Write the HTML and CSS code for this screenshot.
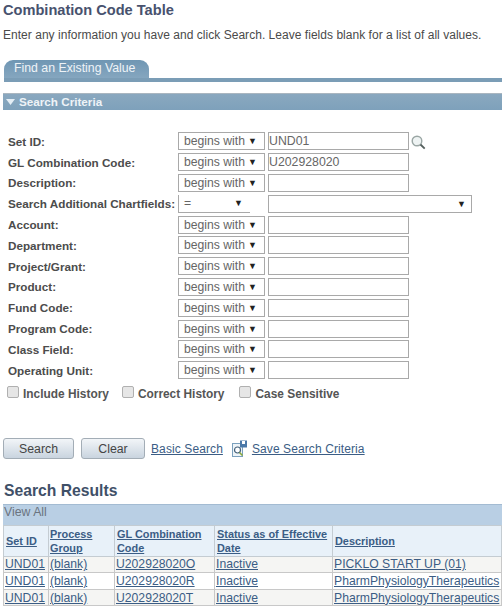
FILE: index.html
```html
<!DOCTYPE html>
<html lang="en">
<head>
    <meta charset="UTF-8">
    <title>Combination Code Table</title>
    <link rel="stylesheet" href="styles.css">
</head>
<body>
    <h1 class="page-title">Combination Code Table</h1>
    <p class="page-hint">Enter any information you have and click Search. Leave fields blank for a list of all values.</p>

    <div class="tab-strip">
        <div class="tab">Find an Existing Value</div>
    </div>

    <div class="section-bar">
        <svg class="section-arrow" width="9" height="6" viewBox="0 0 9 6"><path d="M0 0h9L4.5 6z" fill="#e4eef5"/></svg>
        Search Criteria
    </div>

    <div class="criteria">
        <div class="row">
            <label>Set ID:</label>
            <div class="select"><span>begins with</span><i>▼</i></div>
            <div class="input">UND01</div>
            <svg class="lookup" width="15" height="15" viewBox="0 0 15 15">
                <circle cx="6" cy="6" r="4.8" fill="#eef3f3" stroke="#9aa6a4" stroke-width="1.4"/>
                <path d="M9.5 9.5l4.2 4.2" stroke="#55605e" stroke-width="1.8"/>
            </svg>
        </div>
        <div class="row">
            <label>GL Combination Code:</label>
            <div class="select"><span>begins with</span><i>▼</i></div>
            <div class="input">U202928020</div>
        </div>
        <div class="row">
            <label>Description:</label>
            <div class="select"><span>begins with</span><i>▼</i></div>
            <div class="input"></div>
        </div>
        <div class="row">
            <label>Search Additional Chartfields:</label>
            <div class="select select-bare"><span>=</span><i>▼</i></div>
            <div class="input input-wide"><i>▼</i></div>
        </div>
        <div class="row">
            <label>Account:</label>
            <div class="select"><span>begins with</span><i>▼</i></div>
            <div class="input"></div>
        </div>
        <div class="row">
            <label>Department:</label>
            <div class="select"><span>begins with</span><i>▼</i></div>
            <div class="input"></div>
        </div>
        <div class="row">
            <label>Project/Grant:</label>
            <div class="select"><span>begins with</span><i>▼</i></div>
            <div class="input"></div>
        </div>
        <div class="row">
            <label>Product:</label>
            <div class="select"><span>begins with</span><i>▼</i></div>
            <div class="input"></div>
        </div>
        <div class="row">
            <label>Fund Code:</label>
            <div class="select"><span>begins with</span><i>▼</i></div>
            <div class="input"></div>
        </div>
        <div class="row">
            <label>Program Code:</label>
            <div class="select"><span>begins with</span><i>▼</i></div>
            <div class="input"></div>
        </div>
        <div class="row">
            <label>Class Field:</label>
            <div class="select"><span>begins with</span><i>▼</i></div>
            <div class="input"></div>
        </div>
        <div class="row">
            <label>Operating Unit:</label>
            <div class="select"><span>begins with</span><i>▼</i></div>
            <div class="input"></div>
        </div>
    </div>

    <div class="checks">
        <div class="check"><span class="box"></span>Include History</div>
        <div class="check"><span class="box"></span>Correct History</div>
        <div class="check"><span class="box"></span>Case Sensitive</div>
    </div>

    <div class="actions">
        <button class="btn">Search</button>
        <button class="btn">Clear</button>
        <a class="link">Basic Search</a>
        <svg class="save-icon" width="16" height="17" viewBox="0 0 16 17">
            <rect x="0.5" y="3.5" width="10" height="13" fill="#eef4f8" stroke="#7ba0bd"/>
            <rect x="8" y="0.5" width="7" height="7" fill="#4a78a8"/>
            <rect x="10" y="1" width="3" height="3" fill="#fff"/>
            <circle cx="5.5" cy="10" r="3" fill="#fff" stroke="#44607a" stroke-width="1.2"/>
            <path d="M7.5 12.5l3 3" stroke="#8aa83c" stroke-width="1.6"/>
        </svg>
        <a class="link">Save Search Criteria</a>
    </div>

    <h2 class="results-title">Search Results</h2>
    <div class="view-all">View All</div>
    <table class="results">
        <tr>
            <th class="col-set"><a>Set ID</a></th>
            <th class="col-group"><a>Process Group</a></th>
            <th class="col-code"><a>GL Combination Code</a></th>
            <th class="col-status"><a>Status as of Effective Date</a></th>
            <th><a>Description</a></th>
        </tr>
        <tr>
            <td><a>UND01</a></td>
            <td><a>(blank)</a></td>
            <td><a>U202928020O</a></td>
            <td><a>Inactive</a></td>
            <td><a>PICKLO START UP (01)</a></td>
        </tr>
        <tr>
            <td><a>UND01</a></td>
            <td><a>(blank)</a></td>
            <td><a>U202928020R</a></td>
            <td><a>Inactive</a></td>
            <td><a>PharmPhysiologyTherapeutics</a></td>
        </tr>
        <tr>
            <td><a>UND01</a></td>
            <td><a>(blank)</a></td>
            <td><a>U202928020T</a></td>
            <td><a>Inactive</a></td>
            <td><a>PharmPhysiologyTherapeutics</a></td>
        </tr>
    </table>
</body>
</html>
```

FILE: styles.css
```css
html, body {
    overflow: hidden;
}

body {
    margin: 0;
    height: 614px;
    background: #fff;
    color: #444;
    font-family: 'Liberation Sans', Arial, sans-serif;
    font-size: 12px;
}

.page-title {
    margin: 0;
    padding: 1px 0 0 3px;
    height: 18px;
    font-size: 14.6px;
    line-height: 18px;
    font-weight: bold;
    color: #48526e;
}

.page-hint {
    margin: 8px 0 0 3px;
    height: 16px;
    line-height: 17px;
    letter-spacing: 0.03px;
    color: #4a4a4a;
}

.tab-strip {
    margin-top: 17px;
    margin-left: 4px;
    height: 18px;
    border-bottom: 4px solid #7b9db6;
}

.tab {
    width: 135px;
    height: 18px;
    padding-left: 10px;
    line-height: 17px;
    font-size: 12.3px;
    color: #eef3f7;
    background: linear-gradient(#6f96b3, #85a6bf);
    border-radius: 9px 9px 0 0;
}

.section-bar {
    display: flex;
    align-items: center;
    gap: 4px;
    margin-top: 11px;
    margin-left: 3px;
    height: 15px;
    padding: 0 0 1px 3px;
    font-size: 11.7px;
    font-weight: bold;
    color: #eef3f7;
    background: linear-gradient(#8aa8bf, #7ea1bb);
    border-top: 1px solid #aab6c0;
}

.criteria {
    margin-top: 21px;
}

.row {
    display: flex;
    align-items: center;
    height: 20.8px;
}

.row label {
    width: 178px;
    padding-left: 8px;
    box-sizing: border-box;
    font-size: 11.7px;
    font-weight: bold;
    white-space: nowrap;
    color: #4c4c4c;
}

.select {
    display: flex;
    justify-content: space-between;
    align-items: center;
    box-sizing: border-box;
    width: 87px;
    height: 18px;
    padding: 0 7px 0 5px;
    font-size: 12.2px;
    border: 1px solid #a9a9a9;
    color: #666;
}

.select i, .input i {
    font-style: normal;
    font-size: 9px;
    color: #222;
}

.select-bare {
    width: 72px;
    border-width: 0 0 1px 1px;
}

.input {
    box-sizing: border-box;
    width: 141px;
    height: 18px;
    margin-left: 3px;
    padding-left: 0;
    line-height: 16px;
    font-size: 12.3px;
    border: 1px solid #a9a9a9;
    color: #666;
}

.input-wide {
    display: flex;
    justify-content: flex-end;
    align-items: center;
    width: 204px;
    margin-left: 18px;
    padding-right: 5px;
}

.lookup {
    margin-left: 2px;
    margin-top: 3px;
}

.checks {
    display: flex;
    margin-top: 3px;
    padding-left: 7px;
    height: 20px;
    gap: 13px;
    font-size: 11.9px;
    font-weight: bold;
    color: #555;
}

.check {
    display: flex;
    align-items: center;
}

.check:last-child {
    margin-left: 2px;
}

.box {
    box-sizing: border-box;
    width: 12px;
    height: 12px;
    margin-right: 4px;
    margin-top: -3px;
    border: 1px solid #b0b0b0;
    border-radius: 2px;
    background: #e6e6e6;
}

.actions {
    display: flex;
    align-items: center;
    margin-top: 34px;
    padding-left: 3px;
    height: 22px;
}

.btn {
    width: 71px;
    height: 21px;
    margin-right: 7px;
    padding: 0;
    font-family: inherit;
    font-size: 12.3px;
    color: #444;
    background: linear-gradient(#f2f5f8, #c9d4df);
    border: 1px solid #a3adb6;
    border-radius: 3px;
}

.btn + .btn {
    width: 64px;
    margin-right: 6px;
}

.link, a {
    color: #3b5d85;
    text-decoration: underline;
}

.actions .link {
    letter-spacing: 0.1px;
}

.save-icon {
    margin: 0 4px 0 9px;
}

.results-title {
    margin: 22px 0 0 4px;
    height: 18px;
    font-size: 15.7px;
    line-height: 18px;
    color: #3f5068;
}

.view-all {
    margin: 4px 0 0 3px;
    height: 20px;
    padding-left: 1px;
    line-height: 15px;
    font-size: 12.3px;
    color: #6b7480;
    background: #b9cfe4;
    border-top: 1px solid #a3bbd2;
}

.results {
    margin-left: 3px;
    width: 499px;
    table-layout: fixed;
    border-collapse: collapse;
    font-size: 12.2px;
}

.results th {
    box-sizing: border-box;
    height: 31px;
    padding: 0 2px;
    text-align: left;
    line-height: 14px;
    font-size: 10.9px;
    font-weight: bold;
    background: #e8f1f9;
    border: 1px solid #c4ccd2;
}

.results td {
    height: 15.6px;
    padding: 0 0 0 1px;
    white-space: nowrap;
    overflow: hidden;
    line-height: 14px;
    border: 1px solid #c8c8c8;
    background: #f5f5f3;
}

.results tr:nth-child(3) td {
    background: #fff;
}

.col-set { width: 45px; }
.results .col-group { width: 66px; padding-left: 1px; }
.col-code { width: 100px; }
.col-status { width: 118px; }
```
